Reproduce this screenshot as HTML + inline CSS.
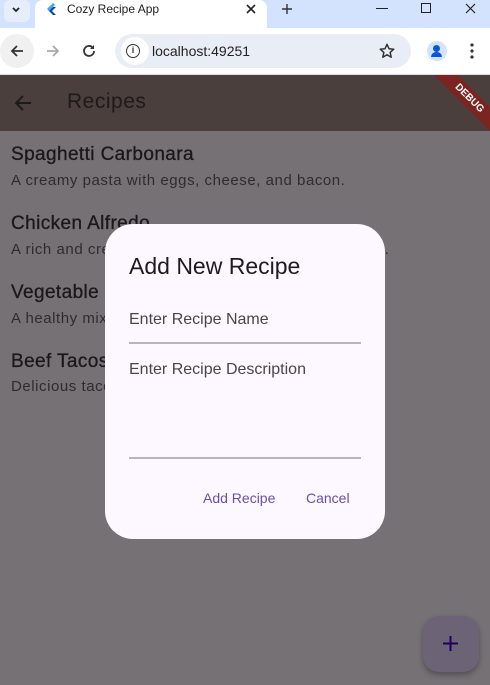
<!DOCTYPE html>
<html><head><meta charset="utf-8"><style>
*{margin:0;padding:0;box-sizing:border-box}
body{width:490px;height:685px;overflow:hidden;font-family:"Liberation Sans",sans-serif;background:#767174;position:relative}
.abs{position:absolute}
.tabbar{left:0;top:0;width:490px;height:28px;background:#d3e3fd}
.tab{left:35px;top:0;width:232px;height:28px;background:#fff;border-radius:8px 8px 0 0}
.toolbar{left:0;top:28px;width:490px;height:47px;background:#fff;border-bottom:1px solid #dde}
.url{left:115px;top:34px;width:296px;height:34px;background:#e9eef6;border-radius:17px}
.appbar{left:0;top:75px;width:490px;height:56px;background:#4a3f3c}
.t{color:#1a181a;font-size:19px;left:11px;letter-spacing:0.4px;-webkit-text-stroke:0.3px #1a181a}
.s{color:#2e2c2f;font-size:15px;left:11px;letter-spacing:0.55px}
.dlg{left:105px;top:224px;width:280px;height:315px;background:#fdf7ff;border-radius:28px}
.fab{left:423px;top:616px;width:56px;height:56px;background:#6c6376;border-radius:16px;box-shadow:0 3px 6px rgba(0,0,0,.3)}
</style></head><body>
<div class="abs tabbar"></div>
<div class="abs" style="left:4px;top:0;width:26px;height:22px;background:#e6eefb;border-radius:6px"></div>
<svg class="abs" style="left:11px;top:6px" width="10" height="8"><path d="M2 2l3 3 3-3" stroke="#222" stroke-width="1.8" fill="none"/></svg>
<div class="abs tab"></div>
<svg class="abs" style="left:45px;top:2px" width="12" height="14" viewBox="0 0 12 14"><path d="M8 1L2 7l2 2 6-6z" fill="#42a5f5"/><path d="M4 9l4 4h3L7 9l4-4H8z" fill="#0d47a1"/></svg>
<div class="abs" style="left:67px;top:2px;font-size:12px;color:#222">Cozy Recipe App</div>
<svg class="abs" style="left:245px;top:3px" width="12" height="12"><path d="M2 2l8 8M10 2l-8 8" stroke="#222" stroke-width="1.6"/></svg>
<svg class="abs" style="left:281px;top:3px" width="12" height="12"><path d="M6 1v10M1 6h10" stroke="#333" stroke-width="1.4"/></svg>
<div class="abs" style="left:376px;top:8px;width:12px;height:1px;background:#222"></div>
<div class="abs" style="left:421px;top:3px;width:10px;height:10px;border:1px solid #222"></div>
<svg class="abs" style="left:465px;top:3px" width="11" height="11"><path d="M1 1l9 9M10 1l-9 9" stroke="#222" stroke-width="1.2"/></svg>
<div class="abs toolbar"></div>
<div class="abs" style="left:0;top:34px;width:34px;height:34px;background:#f0f0f0;border-radius:17px"></div>
<svg class="abs" style="left:9px;top:43px" width="16" height="16"><path d="M14 8H3M8 3L3 8l5 5" stroke="#333" stroke-width="1.8" fill="none"/></svg>
<svg class="abs" style="left:45px;top:43px" width="16" height="16"><path d="M2 8h11M8 3l5 5-5 5" stroke="#aaa" stroke-width="1.8" fill="none"/></svg>
<svg class="abs" style="left:81px;top:43px" width="16" height="16"><path d="M13 8a5 5 0 1 1-1.5-3.6" stroke="#333" stroke-width="1.8" fill="none"/><path d="M13 2v4h-4z" fill="#333"/></svg>
<div class="abs url"></div>
<div class="abs" style="left:121px;top:37px;width:28px;height:28px;background:#fff;border-radius:14px"></div>
<div class="abs" style="left:126px;top:44px;width:14px;height:14px;border:1.5px solid #333;border-radius:7px;font-size:9px;text-align:center;line-height:11px;font-weight:bold;color:#333">i</div>
<div class="abs" style="left:152px;top:43px;font-size:14px;color:#222">localhost:49251</div>
<svg class="abs" style="left:378px;top:42px" width="18" height="18" viewBox="0 0 24 24"><path d="M12 3l2.7 6 6.3.6-4.8 4.3 1.4 6.4L12 17l-5.6 3.3 1.4-6.4L3 9.6 9.3 9z" stroke="#333" stroke-width="2" fill="none" stroke-linejoin="round"/></svg>
<div class="abs" style="left:427px;top:41px;width:20px;height:20px;background:#d3e3fd;border-radius:10px"></div>
<div class="abs" style="left:433px;top:45px;width:7px;height:7px;background:#0b57d0;border-radius:4px"></div>
<div class="abs" style="left:431px;top:52px;width:11px;height:5px;background:#0b57d0;border-radius:5px 5px 0 0"></div>
<svg class="abs" style="left:469px;top:42px" width="6" height="18"><circle cx="3" cy="3" r="1.6" fill="#333"/><circle cx="3" cy="9" r="1.6" fill="#333"/><circle cx="3" cy="15" r="1.6" fill="#333"/></svg>
<div class="abs appbar"></div>
<svg class="abs" style="left:13px;top:93px" width="20" height="20"><path d="M18 10H3M10 3l-7 7 7 7" stroke="#1e1a19" stroke-width="2" fill="none"/></svg>
<div class="abs" style="left:67px;top:90px;font-size:21px;color:#1e1a19;letter-spacing:0.5px">Recipes</div>
<div class="abs" style="left:430px;top:75px;width:60px;height:60px;overflow:hidden"><div style="position:absolute;left:10px;top:-18px;width:100px;height:17px;background:#7a2522;transform:rotate(45deg);transform-origin:0 0;color:#fff;font-size:10px;font-weight:bold;text-align:center;line-height:17px">DEBUG</div></div>
<div class="abs t" style="top:144px">Spaghetti Carbonara</div>
<div class="abs s" style="top:172px">A creamy pasta with eggs, cheese, and bacon.</div>
<div class="abs t" style="top:213px">Chicken Alfredo</div>
<div class="abs s" style="top:241px">A rich and creamy pasta with chicken and parmesan.</div>
<div class="abs t" style="top:282px">Vegetable Stir Fry</div>
<div class="abs s" style="top:310px">A healthy mix of vegetables stir fried in sauce.</div>
<div class="abs t" style="top:351px">Beef Tacos</div>
<div class="abs s" style="top:378px">Delicious tacos with seasoned beef and toppings.</div>
<div class="abs dlg"></div>
<div class="abs" style="left:129px;top:253px;font-size:23px;color:#1d1b20">Add New Recipe</div>
<div class="abs" style="left:129px;top:311px;font-size:16px;color:#49454f">Enter Recipe Name</div>
<div class="abs" style="left:129px;top:342px;width:232px;height:1.5px;background:#b9b5bd"></div>
<div class="abs" style="left:129px;top:361px;font-size:16px;color:#49454f">Enter Recipe Description</div>
<div class="abs" style="left:129px;top:457px;width:232px;height:1.5px;background:#b9b5bd"></div>
<div class="abs" style="left:203px;top:490px;font-size:14px;color:#6750a4">Add Recipe</div>
<div class="abs" style="left:306px;top:490px;font-size:14px;color:#6750a4">Cancel</div>
<div class="abs fab"></div>
<svg class="abs" style="left:442px;top:635px" width="17" height="17"><path d="M8.5 1v15M1 8.5h15" stroke="#21005d" stroke-width="2"/></svg>
</body></html>
